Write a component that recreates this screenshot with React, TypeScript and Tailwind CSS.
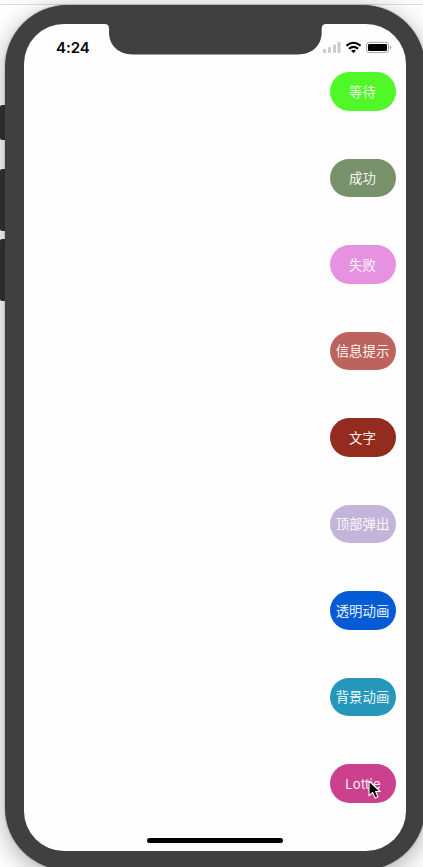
const actions = [
  { label: '等待', color: 'bg-[#50f828]' },
  { label: '成功', color: 'bg-[#77916b]' },
  { label: '失败', color: 'bg-[#e792e1]' },
  { label: '信息提示', color: 'bg-[#bb635c]' },
  { label: '文字', color: 'bg-[#932c1e]' },
  { label: '顶部弹出', color: 'bg-[#c3b5d9]' },
  { label: '透明动画', color: 'bg-[#055bd5]' },
  { label: '背景动画', color: 'bg-[#2497ba]' },
  { label: 'Lottie', color: 'bg-[#cb418d]' },
];

function SideKeys() {
  return (
    <div className="relative z-10 flex w-[5px] shrink-0 flex-col pt-[105px]">
      <div className="h-[35px] rounded-l-[2px] bg-[#2b2b2b]" />
      <div className="mt-[29px] h-[62px] rounded-l-[2px] bg-[#2b2b2b]" />
      <div className="mt-[8px] h-[62px] rounded-l-[2px] bg-[#2b2b2b]" />
    </div>
  );
}

function Notch() {
  return (
    <svg className="absolute -top-px left-[79px]" width="225" height="32" viewBox="103 23 225 32">
      <path
        d="M103 23V24H105Q109 24 109 29V32C109 45 118 54.4 133 54.4H298C313 54.4 321.7 45 321.7 32V29Q321.7 24 326 24H328V23Z"
        fill="#404040"
      />
    </svg>
  );
}

function StatusIcons() {
  return (
    <svg width="70" height="14" viewBox="322 41 70 14">
      <g fill="#cbcbcb">
        <rect x="323" y="49" width="3" height="4" rx="0.8" />
        <rect x="328" y="47" width="3" height="6" rx="0.8" />
        <rect x="333" y="44.5" width="3" height="8.5" rx="0.8" />
        <rect x="337.5" y="42" width="3" height="11" rx="0.8" />
      </g>
      <g fill="none" stroke="#000" strokeWidth="2.1">
        <path d="M346.4 45.7Q353.4 39.8 360.6 45.7" />
        <path d="M348.9 48.7Q353.4 45 358.1 48.7" />
      </g>
      <path d="M351 50.6Q353.5 48.8 356 50.6L353.5 53.2Z" fill="#000" />
      <rect x="366.6" y="42.3" width="21.9" height="10.3" rx="2.8" fill="none" stroke="#a2a2a2" />
      <rect x="368" y="44" width="19" height="7" rx="1.2" fill="#000" />
      <path d="M390 46V49.3Q391.3 48.8 391.3 47.6T390 46Z" fill="#999" />
    </svg>
  );
}

function Pointer() {
  return (
    <svg className="absolute left-[37.5px] top-[16px]" width="14" height="20" viewBox="0 0 14 20">
      <path
        d="M1 1V15.8L4.7 12.5L7.1 18L9.9 16.8L7.6 11.5H12.2Z"
        fill="#000"
        stroke="#fff"
        strokeWidth="1.1"
        strokeLinejoin="round"
      />
    </svg>
  );
}

export default function App() {
  return (
    <div className="h-[867px] w-[423px] overflow-hidden bg-[linear-gradient(#fcfcfc_4px,#dddddd_4px,#dddddd_5px,#ffffff_5px)]">
      <div className="flex w-[426px]">
        <SideKeys />
        <div className="mt-[4.5px] h-[865.5px] w-[420px] shrink-0 rounded-[62px] bg-[#404040] px-[19px] pt-[19.5px] shadow-[0_0_2px_rgba(0,0,0,0.35),0_6px_26px_rgba(0,0,0,0.32)]">
          <div className="relative flex h-[827px] w-[382px] flex-col rounded-[40px] bg-[#fefefe]">
            <Notch />
            <div className="flex h-[48px] shrink-0 items-start justify-between pl-[32px] pr-[14px] pt-[17px]">
              <div className="mt-[-2px] font-[Inter,sans-serif] text-[15px] font-semibold leading-[17px] tracking-[-0.05px] text-black">
                4:24
              </div>
              <StatusIcons />
            </div>
            <div className="flex flex-col items-end gap-[48px] pr-[10px]">
              {actions.map((action) => (
                <button
                  key={action.label}
                  className={`relative flex h-[38.55px] w-[66px] shrink-0 items-center justify-center whitespace-nowrap rounded-[20px] pr-px font-['Noto_Sans_CJK_SC',sans-serif] text-[13.4px] font-[350] leading-none text-white ${action.color}`}
                >
                  {action.label === 'Lottie' ? (
                    <span className="pl-px pt-px font-[Inter,sans-serif] text-[13.2px] font-normal tracking-[0.15px] text-white/90">
                      {action.label}
                    </span>
                  ) : (
                    <span>{action.label}</span>
                  )}
                  {action.label === 'Lottie' && <Pointer />}
                </button>
              ))}
            </div>
            <div className="mx-auto mb-[8px] mt-auto h-[5px] w-[136px] rounded-full bg-black" />
          </div>
        </div>
      </div>
    </div>
  );
}
